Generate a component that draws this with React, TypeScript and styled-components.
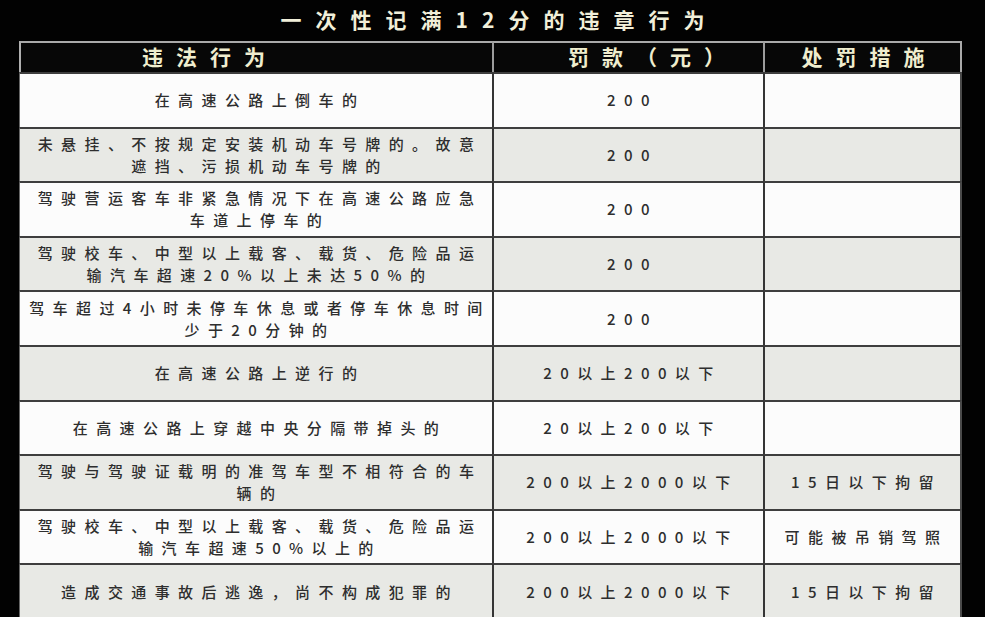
import React from 'react'
import styled, { createGlobalStyle } from 'styled-components';

type Row = { act: string[]; fine: string; measure?: string; shade?: boolean };

const rows: Row[] = [
    { act: ['在高速公路上倒车的'], fine: '200' },
    { act: ['未悬挂、不按规定安装机动车号牌的。故意', '遮挡、污损机动车号牌的'], fine: '200', shade: true },
    { act: ['驾驶营运客车非紧急情况下在高速公路应急', '车道上停车的'], fine: '200' },
    { act: ['驾驶校车、中型以上载客、载货、危险品运', '输汽车超速20%以上未达50%的'], fine: '200', shade: true },
    { act: ['驾车超过4小时未停车休息或者停车休息时间', '少于20分钟的'], fine: '200' },
    { act: ['在高速公路上逆行的'], fine: '20以上200以下', shade: true },
    { act: ['在高速公路上穿越中央分隔带掉头的'], fine: '20以上200以下' },
    { act: ['驾驶与驾驶证载明的准驾车型不相符合的车', '辆的'], fine: '200以上2000以下', measure: '15日以下拘留', shade: true },
    { act: ['驾驶校车、中型以上载客、载货、危险品运', '输汽车超速50%以上的'], fine: '200以上2000以下', measure: '可能被吊销驾照' },
    { act: ['造成交通事故后逃逸，尚不构成犯罪的'], fine: '200以上2000以下', measure: '15日以下拘留', shade: true },
];

const App = () =>
    <Page>
        <GlobalStyle/>
        <Title>一次性记满12分的违章行为</Title>
        <Table>
            <HeadCell $pad={121}>违法行为</HeadCell>
            <HeadCell $pad={74} $divider>罚款（元）</HeadCell>
            <HeadCell $divider $center>处罚措施</HeadCell>
            {rows.map((r, i) =>
                <React.Fragment key={i}>
                    <Cell $shade={r.shade}>
                        <Lines>{r.act.map((l, j) => <Line key={j}>{l}</Line>)}</Lines>
                    </Cell>
                    <Cell $shade={r.shade} $divider><Line>{r.fine}</Line></Cell>
                    <Cell $shade={r.shade} $divider $last><Line>{r.measure ?? ''}</Line></Cell>
                </React.Fragment>
            )}
        </Table>
    </Page>;

const GlobalStyle = createGlobalStyle`
  html, body {
    margin: 0;
    padding: 0;
    background: #000;
  }
  body {
    font-family: "Noto Sans CJK SC", "Noto Sans", sans-serif;
  }
`;

const Page = styled.div`
  width: 985px;
  height: 617px;
  overflow: hidden;
  background: #020202;
  box-sizing: border-box;
  padding-left: 19px;
`;

const Title = styled.div`
  height: 41px;
  display: flex;
  align-items: center;
  justify-content: center;
  margin-left: -19px;
  padding-left: 14px;
  padding-bottom: 4px;
  box-sizing: border-box;
  font-size: 21px;
  font-weight: 700;
  letter-spacing: 14px;
  color: #f1efd9;
`;

const Table = styled.div`
  width: 943px;
  display: grid;
  grid-template-columns: 473px 271px 199px;
  grid-template-rows: 31px;
  grid-auto-rows: 54.6px;
`;

const HeadCell = styled.div<{ $pad?: number; $divider?: boolean; $center?: boolean }>`
  display: flex;
  align-items: center;
  justify-content: ${p => p.$center ? 'center' : 'flex-start'};
  padding-left: ${p => p.$pad ?? 14}px;
  padding-bottom: 3px;
  box-sizing: border-box;
  background: #070707;
  border-top: 2px solid #a9a9a9;
  border-left: 2px solid ${p => p.$divider ? '#9c9c9c' : '#b0b0b0'};
  border-right: ${p => p.$center ? '2px solid #a9a9a9' : 'none'};
  font-size: 21px;
  font-weight: 700;
  letter-spacing: 13px;
  color: #efedce;
  white-space: nowrap;
`;

const Cell = styled.div<{ $shade?: boolean; $divider?: boolean; $last?: boolean }>`
  display: flex;
  align-items: center;
  justify-content: center;
  box-sizing: border-box;
  background: ${p => p.$shade ? '#e8e9e5' : '#fcfcfc'};
  border-top: 2px solid #3e3e3e;
  border-left: ${p => p.$divider ? '2px solid #353535' : '1px solid #666'};
  border-right: ${p => p.$last ? '2px solid #4a4a4a' : 'none'};
  padding-left: 8px;
  color: #2e2e2e;
  font-size: 15px;
  font-weight: 500;
  letter-spacing: 8.4px;
  white-space: nowrap;
`;

const Lines = styled.div`
  display: flex;
  flex-direction: column;
  align-items: center;
`;

const Line = styled.span`
  display: block;
  line-height: 22px;
`;

export default App
